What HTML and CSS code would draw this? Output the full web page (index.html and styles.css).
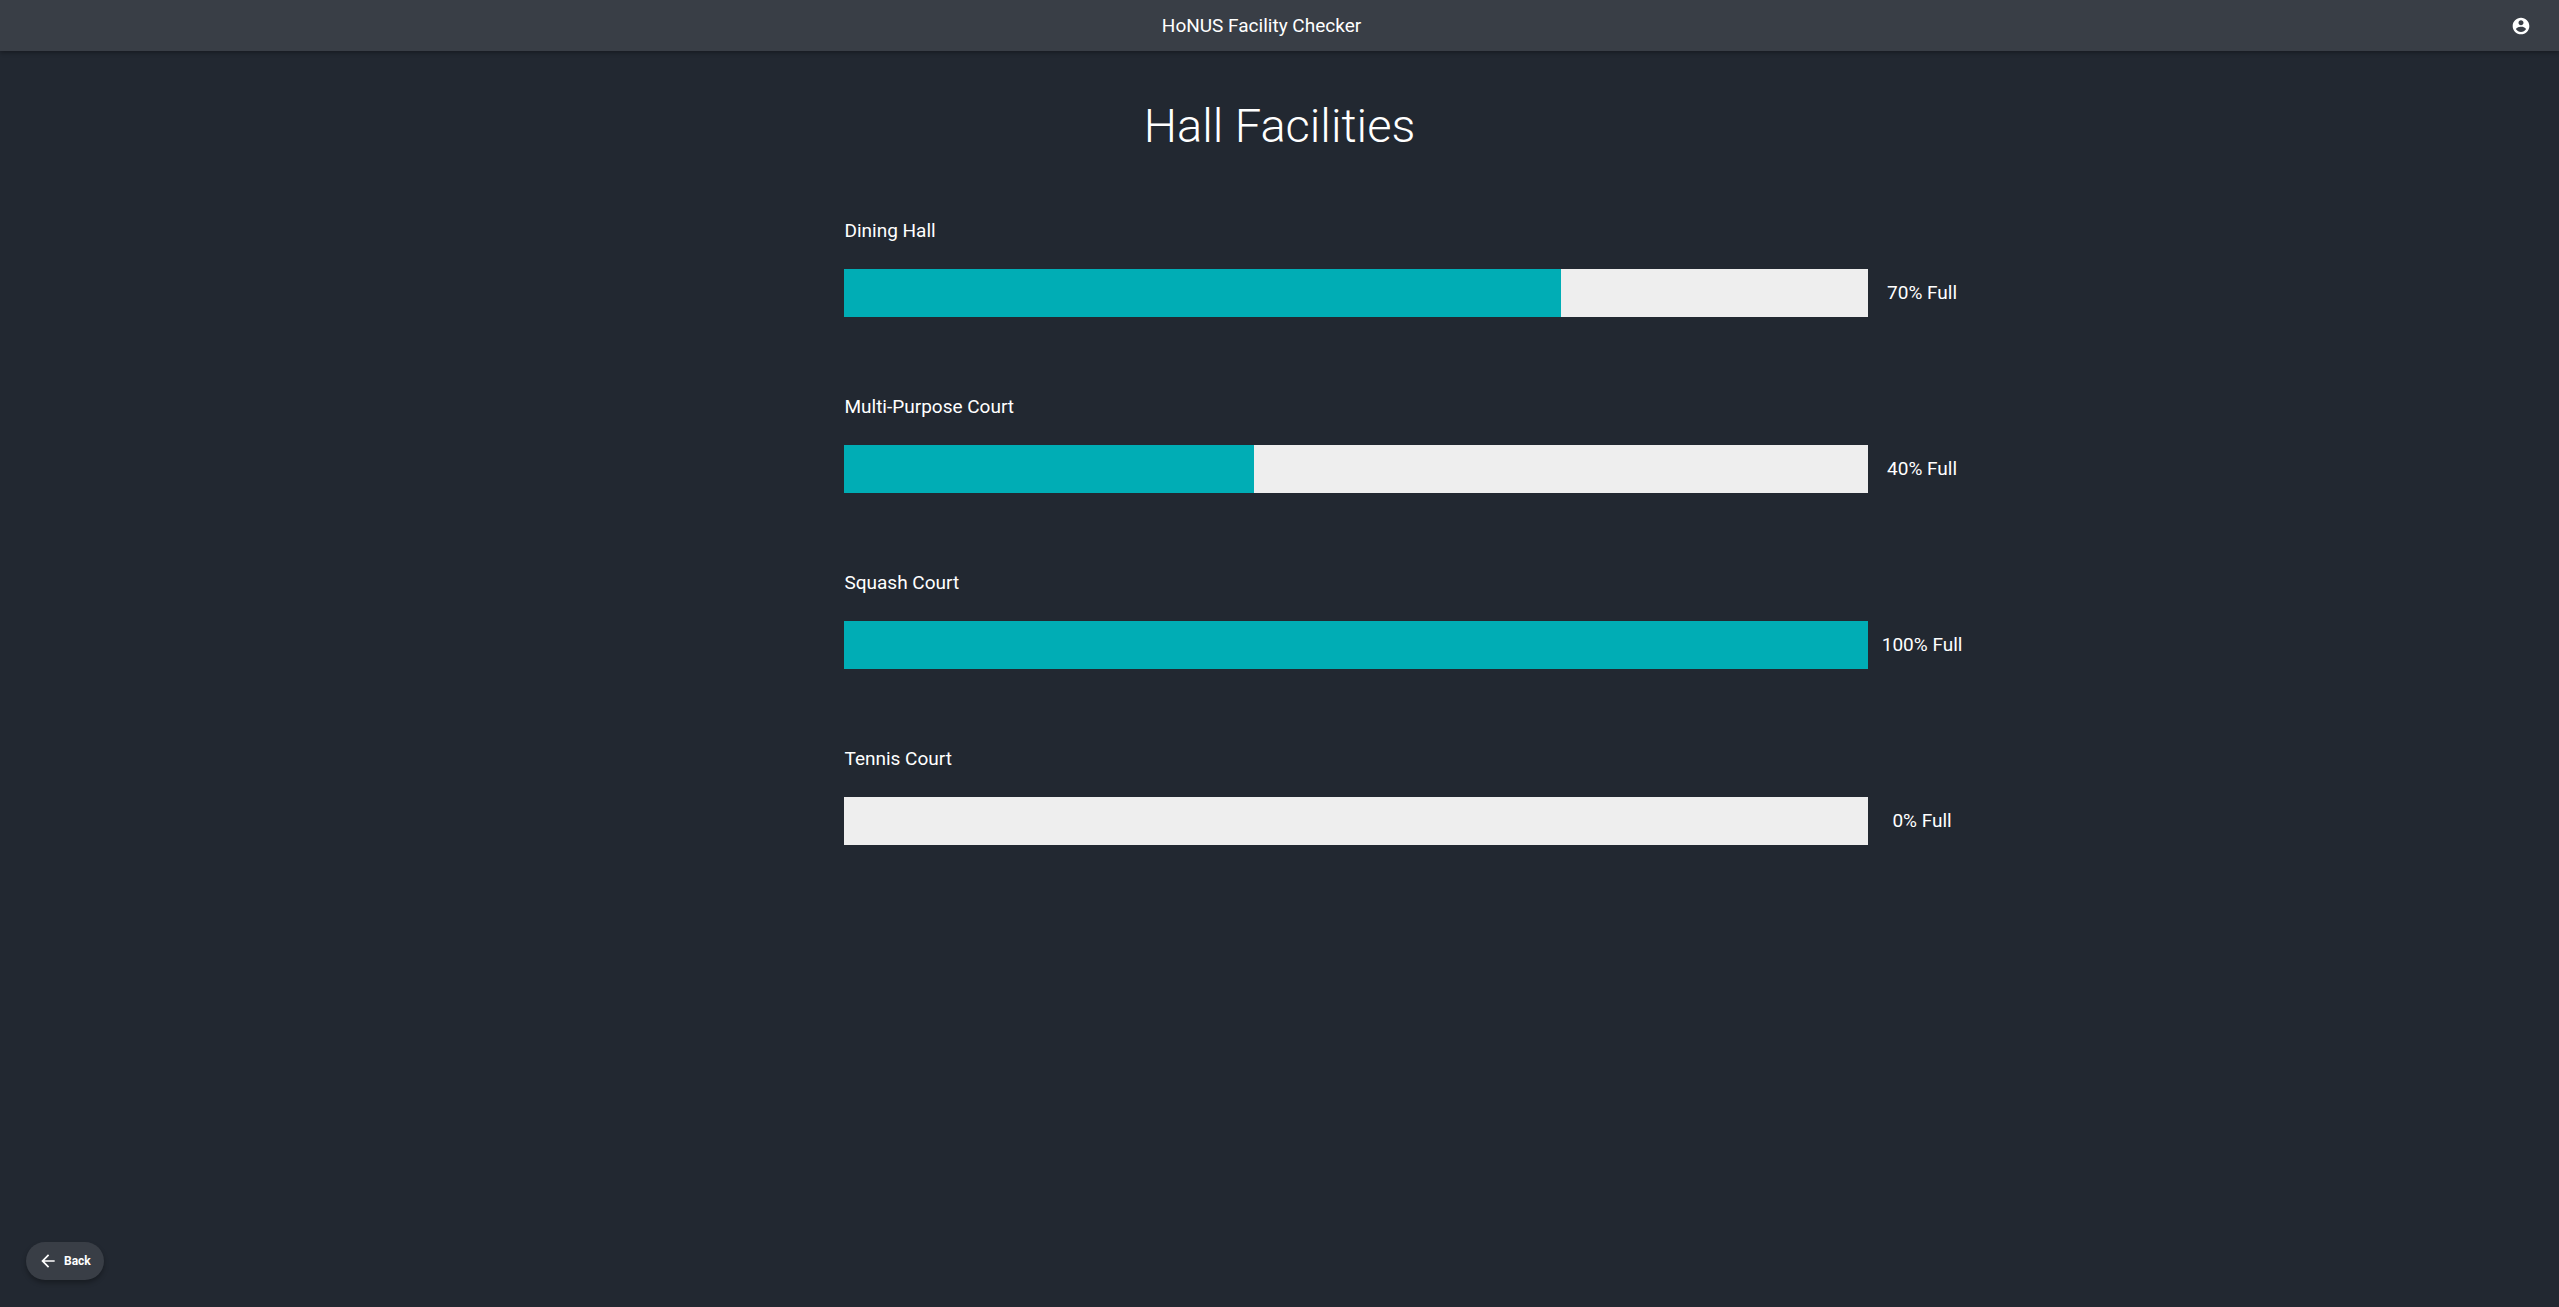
FILE: index.html
```
<!DOCTYPE html>
<html lang="en">
<head>
<meta charset="UTF-8">
<meta name="viewport" content="width=device-width, initial-scale=1.0">
<title>HoNUS Facility Checker</title>
<link rel="stylesheet" href="styles.css">
</head>
<body>
<header class="app-bar">
    <h1 class="app-title">HoNUS Facility Checker</h1>
    <button class="account" aria-label="Account">
        <svg viewBox="0 0 24 24" width="20" height="20"><path d="M12 2C6.48 2 2 6.48 2 12s4.48 10 10 10 10-4.48 10-10S17.52 2 12 2zm0 3c1.66 0 3 1.34 3 3s-1.34 3-3 3-3-1.34-3-3 1.34-3 3-3zm0 14.2c-2.5 0-4.71-1.28-6-3.22.03-1.99 4-3.08 6-3.08 1.99 0 5.97 1.09 6 3.08-1.29 1.94-3.5 3.22-6 3.22z"/></svg>
    </button>
</header>
<main>
    <h2 class="page-title">Hall Facilities</h2>
    <section class="facilities">
        <div class="facility">
            <h3>Dining Hall</h3>
            <div class="row">
                <div class="bar"><div class="fill" style="width: 70%"></div></div>
                <span class="status">70% Full</span>
            </div>
        </div>
        <div class="facility">
            <h3>Multi-Purpose Court</h3>
            <div class="row">
                <div class="bar"><div class="fill" style="width: 40%"></div></div>
                <span class="status">40% Full</span>
            </div>
        </div>
        <div class="facility">
            <h3>Squash Court</h3>
            <div class="row">
                <div class="bar"><div class="fill" style="width: 100%"></div></div>
                <span class="status">100% Full</span>
            </div>
        </div>
        <div class="facility">
            <h3>Tennis Court</h3>
            <div class="row">
                <div class="bar"><div class="fill" style="width: 0%"></div></div>
                <span class="status">0% Full</span>
            </div>
        </div>
    </section>
</main>
<footer>
    <button class="back">
        <svg viewBox="0 0 24 24" width="20" height="20"><path d="M20 11H7.83l5.59-5.59L12 4l-8 8 8 8 1.41-1.41L7.83 13H20v-2z"/></svg>
        Back
    </button>
</footer>
</body>
</html>
```

FILE: styles.css
```
* {
    box-sizing: border-box;
}
body {
    display: flex;
    flex-direction: column;
    min-height: 100vh;
    margin: 0;
    background-color: #222831;
    color: #fff;
    font-family: Roboto, sans-serif;
}
h1, h2, h3 {
    margin: 0;
}
svg {
    fill: currentColor;
}
.app-bar {
    display: flex;
    align-items: center;
    height: 51px;
    padding: 0 24px 0 16px;
    background-color: #393e46;
    box-shadow: 0 2px 4px rgba(0, 0, 0, 0.3);
}
.app-title {
    flex: 1;
    font-size: 19px;
    line-height: 28px;
    font-weight: 400;
    text-align: center;
}
.account {
    display: flex;
    padding: 4px;
    border: none;
    background: none;
    color: #fff;
    cursor: pointer;
}
main {
    flex: 1;
}
.page-title {
    margin-top: 47px;
    font-size: 47px;
    line-height: 56px;
    font-weight: 300;
    text-align: center;
}
.facilities {
    margin: 63px 0 0 33%;
}
.facility {
    margin-bottom: 76px;
}
.facility h3 {
    font-size: 19px;
    line-height: 28px;
    font-weight: 400;
}
.row {
    display: flex;
    align-items: center;
    margin-top: 24px;
}
.bar {
    width: 40vw;
    height: 48px;
    background-color: #eee;
}
.fill {
    height: 100%;
    background-color: #00adb5;
}
.status {
    width: 108px;
    font-size: 19px;
    line-height: 28px;
    text-align: center;
}
footer {
    padding: 0 26px 27px;
}
.back {
    display: flex;
    align-items: center;
    gap: 6px;
    height: 38px;
    padding: 0 13px 0 12px;
    border: none;
    border-radius: 20px;
    background-color: #393e46;
    color: #fff;
    font: 700 12px Roboto, sans-serif;
    box-shadow: 0 3px 5px rgba(0, 0, 0, 0.3);
    cursor: pointer;
}
```
